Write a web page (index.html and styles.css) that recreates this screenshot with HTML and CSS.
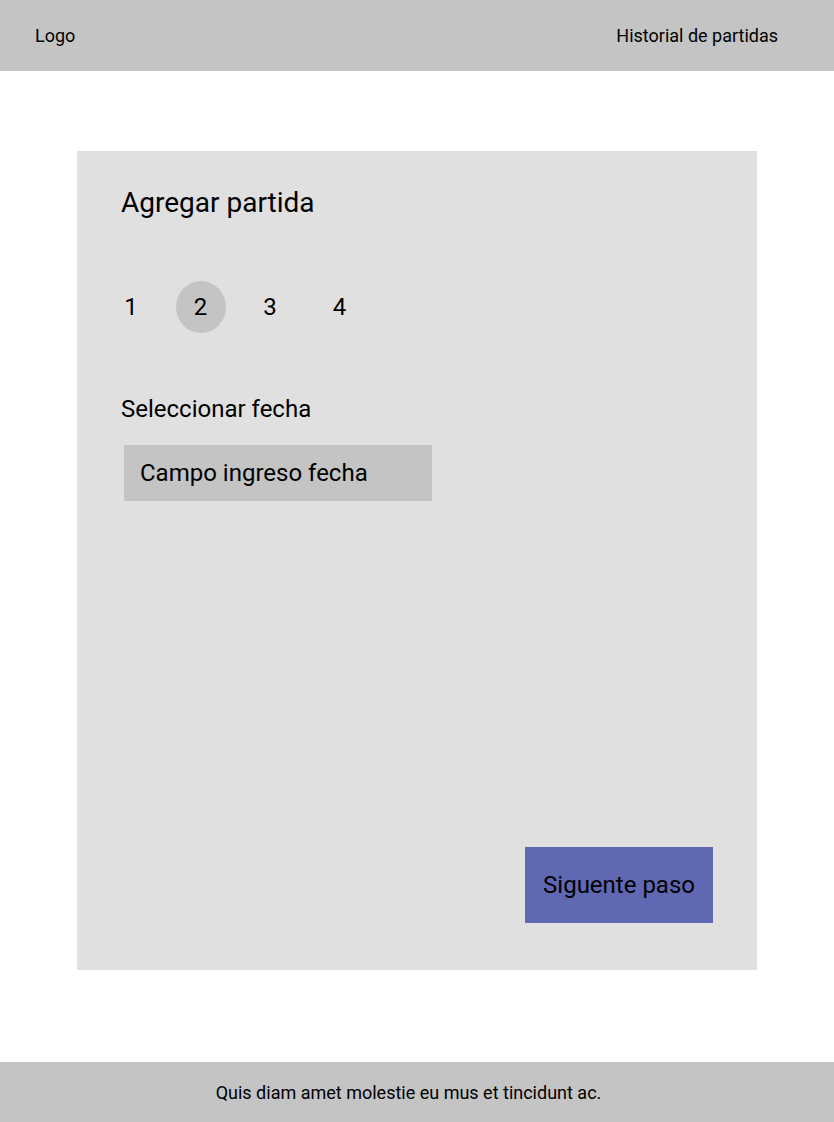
FILE: index.html
```html
<!DOCTYPE html>
<html lang="es">
<head>
<meta charset="utf-8">
<title>Agregar partida</title>
<link rel="stylesheet" href="styles.css">
</head>
<body>
<div class="page">
  <header class="topbar">
    <span class="logo">Logo</span>
    <a class="nav-link" href="#">Historial de partidas</a>
  </header>
  <main class="main">
    <section class="card">
      <h1 class="card-title">Agregar partida</h1>
      <ol class="steps">
        <li class="step">1</li>
        <li class="step step-active">2</li>
        <li class="step">3</li>
        <li class="step">4</li>
      </ol>
      <label class="field-label" for="fecha">Seleccionar fecha</label>
      <div class="field" id="fecha">Campo ingreso fecha</div>
      <button class="next-btn" type="button">Siguente paso</button>
    </section>
  </main>
  <footer class="footer">Quis diam amet molestie eu mus et tincidunt ac.</footer>
</div>
</body>
</html>
```

FILE: styles.css
```css
* { box-sizing: border-box; }

html, body {
  margin: 0;
  padding: 0;
}

body {
  font-family: Roboto, "Liberation Sans", Arial, sans-serif;
  color: #000;
  background: #fff;
}

.page {
  min-height: 100vh;
  display: flex;
  flex-direction: column;
}

.topbar {
  height: 71px;
  flex: none;
  background: #c4c4c4;
  display: flex;
  align-items: center;
  justify-content: space-between;
  padding: 0 56px 0 35px;
  font-size: 18px;
  line-height: 21px;
}

.logo { color: #000; }

.nav-link {
  color: #000;
  text-decoration: none;
}

.main {
  flex: 1;
  display: flex;
  flex-direction: column;
  align-items: center;
  padding: 80px 0 92px;
}

.card {
  flex: 1;
  width: 680px;
  background: #e0e0e0;
  display: flex;
  flex-direction: column;
  align-items: flex-start;
  padding: 35px 44px 47px 44px;
}

.card-title {
  margin: 0;
  font-size: 28px;
  line-height: 33px;
  font-weight: 400;
}

.steps {
  list-style: none;
  margin: 62px 0 0 -15px;
  padding: 0;
  display: flex;
  gap: 19.5px;
}

.step {
  width: 50px;
  text-align: center;
  font-size: 24px;
  line-height: 28px;
  padding: 12px 0;
  border-radius: 50%;
}

.step-active {
  background: #c4c4c4;
}

.field-label {
  margin-top: 62px;
  font-size: 24px;
  line-height: 28px;
}

.field {
  margin: 22px 0 0 3px;
  width: 308px;
  background: #c4c4c4;
  font-size: 24px;
  line-height: 28px;
  padding: 14px 16px;
}

.next-btn {
  margin-top: auto;
  align-self: flex-end;
  border: 0;
  border-radius: 0;
  background: #6168b3;
  color: #000;
  font-family: inherit;
  font-size: 24px;
  line-height: 28px;
  padding: 24px 18px;
  cursor: pointer;
}

.footer {
  height: 60px;
  flex: none;
  background: #c4c4c4;
  display: flex;
  align-items: center;
  justify-content: center;
  padding-right: 17px;
  font-size: 18px;
  line-height: 21px;
}
```
